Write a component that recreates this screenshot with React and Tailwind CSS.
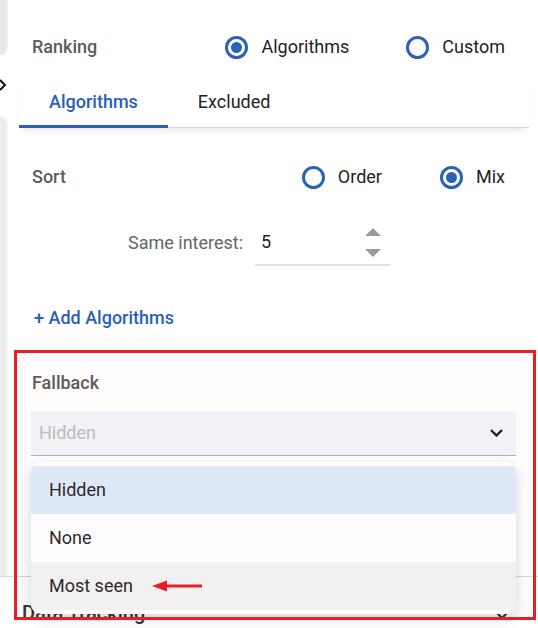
import React from "react";

function Radio({ checked }) {
  return (
    <span className="w-[23px] h-[23px] rounded-full border-[3px] border-[#2a62b8] flex items-center justify-center shrink-0">
      {checked && <span className="w-[11px] h-[11px] rounded-full bg-[#2a62b8]" />}
    </span>
  );
}

function RadioOpt({ checked, label }) {
  return (
    <div className="flex items-center gap-[13px]">
      <Radio checked={checked} />
      <span className="text-[18px] leading-[22px] text-[#222222]">{label}</span>
    </div>
  );
}

export default function App() {
  return (
    <div
      className="relative w-[538px] h-[628px] overflow-hidden bg-white flex flex-col"
      style={{ fontFamily: "Roboto, 'Noto Sans', sans-serif" }}
    >
      <div className="flex h-[576px] shrink-0">
        {/* left strip */}
        <div className="w-[8px] flex flex-col shrink-0">
          <div className="h-[55px] bg-[#e8e8e8] rounded-br-[6px] border-r-2 border-[#f2f2f2]" />
          <div className="h-[62px] flex items-center">
            <svg width="7" height="12" viewBox="0 0 7 12" className="mt-[-3px]">
              <polyline points="0,1 5,6 0,11" fill="none" stroke="#111" strokeWidth="2" />
            </svg>
          </div>
          <div className="flex-1 bg-[#ececec] rounded-tr-[6px] border-r-2 border-[#f3f3f3]" />
        </div>

        {/* panel */}
        <div className="flex-1 flex flex-col">
          {/* Ranking */}
          <div className="mt-[25px] h-[44px] flex items-center pl-[24px] pr-[33px]">
            <span className="text-[18px] leading-[22px] font-medium text-[#5c5c5c]">Ranking</span>
            <div className="ml-auto flex items-center gap-[57px]">
              <RadioOpt checked label="Algorithms" />
              <RadioOpt label="Custom" />
            </div>
          </div>

          {/* Tabs */}
          <div className="mt-[9px] ml-[11px] w-[510px] flex border-b border-[#cfd5e2] shadow-[0_5px_7px_-3px_rgba(0,0,0,0.10)]">
            <div className="h-[50px] -mb-px px-[30px] flex items-center border-b-[3px] border-[#2a5fb5]">
              <span className="text-[18px] leading-[22px] font-medium text-[#2a5fb5]">Algorithms</span>
            </div>
            <div className="h-[50px] -mb-px px-[30px] flex items-center pb-[3px]">
              <span className="text-[18px] leading-[22px] text-[#222222]">Excluded</span>
            </div>
          </div>

          {/* Sort */}
          <div className="mt-[27px] h-[44px] flex items-center pl-[24px] pr-[33px]">
            <span className="text-[18px] leading-[22px] font-medium text-[#5c5c5c]">Sort</span>
            <div className="ml-auto flex items-center gap-[58px]">
              <RadioOpt label="Order" />
              <RadioOpt checked label="Mix" />
            </div>
          </div>

          {/* Same interest */}
          <div className="mt-[21px] flex items-center pl-[120px]">
            <span className="text-[18px] leading-[22px] text-[#666666]">Same interest:</span>
            <div className="ml-[12px] w-[135px] h-[46px] border-b-2 border-[#e0e0e0] flex items-center pl-[6px] pr-[9px]">
              <span className="text-[18px] leading-[22px] text-[#1f1f1f]">5</span>
              <div className="ml-auto flex flex-col gap-[13px]">
                <svg width="16" height="8" viewBox="0 0 16 8">
                  <polygon points="0,8 8,0 16,8" fill="#9b99a2" />
                </svg>
                <svg width="16" height="8" viewBox="0 0 16 8">
                  <polygon points="0,0 16,0 8,8" fill="#9b99a2" />
                </svg>
              </div>
            </div>
          </div>

          {/* Add Algorithms */}
          <div className="mt-[37px] h-[30px] flex items-center pl-[26px]">
            <span className="text-[18px] leading-[22px] font-medium text-[#2a5fb5]">+ Add Algorithms</span>
          </div>

          {/* Fallback */}
          <div className="mt-[39px] pl-[24px] h-[22px] flex items-center">
            <span className="text-[18px] leading-[22px] font-medium text-[#5c5c5c]">Fallback</span>
          </div>
          <div className="mt-[17px] ml-[23px] w-[485px] h-[45px] bg-[#f4f5f8] border-b border-[#aeb6ca] flex items-center pl-[8px] pr-[13px]">
            <span className="text-[18px] leading-[22px] text-[#bdbdbd]">Hidden</span>
            <svg width="13" height="8" viewBox="0 0 13 8" className="ml-auto">
              <polyline points="1,1 6.5,6.5 12,1" fill="none" stroke="#1f1f1f" strokeWidth="2.4" />
            </svg>
          </div>
        </div>
      </div>

      {/* Data Tracking */}
      <div className="border-t border-[#d6d6d6] flex items-start pl-[22px] pr-[29px] pt-[24px]">
        <span className="text-[20px] leading-[24px] font-medium text-[#333333]">Data Tracking</span>
        <svg width="14" height="9" viewBox="0 0 14 9" className="ml-auto mt-[10px]">
          <polyline points="1,1 7,7 13,1" fill="none" stroke="#333" strokeWidth="2.2" />
        </svg>
      </div>

      {/* dropdown menu overlay */}
      <div className="absolute left-[31px] top-[462px] w-[485px] py-[4px] bg-white rounded-[10px] shadow-[0_4px_14px_rgba(0,0,0,0.16)] overflow-hidden">
        <div className="h-[48px] bg-[#deebf8] flex items-center pl-[18px]">
          <span className="text-[18px] leading-[22px] text-[#2b2b2b]">Hidden</span>
        </div>
        <div className="h-[48px] bg-white flex items-center pl-[18px]">
          <span className="text-[18px] leading-[22px] text-[#2b2b2b]">None</span>
        </div>
        <div className="h-[48px] bg-[#f3f3f3] flex items-center pl-[18px]">
          <span className="text-[18px] leading-[22px] text-[#2b2b2b]">Most seen</span>
        </div>
      </div>

      {/* red annotation box */}
      <div className="absolute left-[14px] top-[350px] w-[522px] h-[270px] border-[3px] border-[#e61f27] bg-[rgba(240,0,80,0.012)] pointer-events-none" />

      {/* red arrow */}
      <svg className="absolute left-[150px] top-[578px]" width="54" height="16" viewBox="0 0 54 16">
        <polygon points="2,8 17,2.5 17,13.5" fill="#e61f27" />
        <rect x="15" y="6.5" width="37" height="3" fill="#e61f27" />
      </svg>
    </div>
  );
}
